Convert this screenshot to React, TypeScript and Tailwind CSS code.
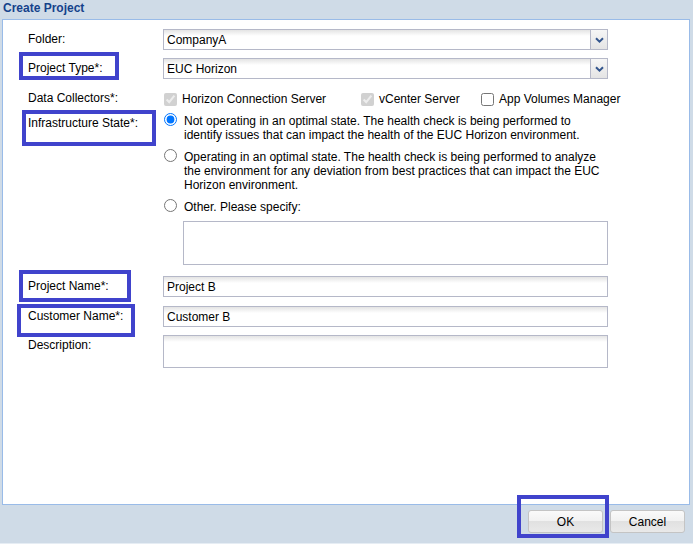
import React from "react"

const field =
  "border border-[#b5b8c8] bg-[linear-gradient(to_bottom,#e4e4e4,#ffffff_6px)]"

function Highlight({ className }: { className: string }) {
  return <div className={`pointer-events-none absolute border-4 border-[#4043cc] ${className}`} />
}

function Label({ text, box }: { text: string; box?: string }) {
  return (
    <div className="relative w-[135px] shrink-0 self-start leading-[21px] whitespace-nowrap">
      {text}
      {box && <Highlight className={box} />}
    </div>
  )
}

function Select({ value }: { value: string }) {
  return (
    <div className={`flex h-[21px] w-[445px] ${field}`}>
      <div className="flex-1 pl-[3px] leading-[20px]">{value}</div>
      <div className="flex w-[17px] items-center justify-center border-l border-[#b5b8c8] bg-[linear-gradient(to_bottom,#f6f6f6,#e4e4e4)]">
        <svg width="9" height="6" viewBox="0 0 9 6">
          <path d="M1 1.2 L4.5 4.6 L8 1.2" fill="none" stroke="#33558d" strokeWidth="2" />
        </svg>
      </div>
    </div>
  )
}

function Check({ label, checked, disabled, width }: { label: string; checked?: boolean; disabled?: boolean; width?: string }) {
  return (
    <label className={`flex items-center gap-[5px] ${width ?? ""}`}>
      <input type="checkbox" defaultChecked={checked} disabled={disabled} className="m-0 h-[13px] w-[13px]" />
      <span>{label}</span>
    </label>
  )
}

function Radio({ checked, children }: { checked?: boolean; children: React.ReactNode }) {
  return (
    <label className="flex items-start gap-[7px] pl-[1px] leading-[14px]">
      <input type="radio" name="state" defaultChecked={checked} className="m-0 h-[13px] w-[13px] shrink-0" />
      <span className="relative top-[1px]">{children}</span>
    </label>
  )
}

function Button({ text, box }: { text: string; box?: boolean }) {
  return (
    <div className="relative">
      <button className="h-[23px] w-[75px] rounded-[3px] border border-[#c4c4c4] bg-[linear-gradient(to_bottom,#fafafa,#f1f1f1_50%,#e1e1e1_50%,#e9e9e9)] text-[12px] text-black">
        {text}
      </button>
      {box && <Highlight className="left-[-11px] top-[-15px] h-[43px] w-[92px]" />}
    </div>
  )
}

export default function App() {
  return (
    <div className="flex h-[544px] w-[693px] flex-col bg-[#cfdbe7] font-['Liberation_Sans',Arial,sans-serif] text-[12px] text-black">
      <div className="h-[19px] pl-[3px] text-[12px] font-bold leading-[16px] text-[#15428b]">Create Project</div>

      <div className="ml-[2px] mr-[3px] flex h-[486px] flex-col border border-[#99bbe8] bg-white pl-[25px] pt-[9px]">
        <div className="flex">
          <Label text="Folder:" />
          <Select value="CompanyA" />
        </div>

        <div className="mt-[8px] flex">
          <Label text="Project Type*:" box="left-[-9px] top-[-6px] h-[28px] w-[100px]" />
          <Select value="EUC Horizon" />
        </div>

        <div className="mt-[9px] flex h-[22px] items-center">
          <Label text="Data Collectors*:" />
          <div className="flex items-center pl-[1px]">
            <Check label="Horizon Connection Server" checked disabled width="w-[197px]" />
            <Check label="vCenter Server" checked disabled width="w-[120px]" />
            <Check label="App Volumes Manager" />
          </div>
        </div>

        <div className="mt-[3px] flex">
          <Label text="Infrastructure State*:" box="left-[-6px] top-[-3px] h-[36px] w-[134px]" />
          <div className="flex w-[445px] flex-col gap-[8px]">
            <Radio checked>
              Not operating in an optimal state. The health check is being performed to
              <br />
              identify issues that can impact the health of the EUC Horizon environment.
            </Radio>
            <Radio>
              Operating in an optimal state. The health check is being performed to analyze
              <br />
              the environment for any deviation from best practices that can impact the EUC
              <br />
              Horizon environment.
            </Radio>
            <Radio>Other. Please specify:</Radio>
            <div className="ml-[20px] h-[44px] w-[425px] border border-[#b5b8c8] bg-white" />
          </div>
        </div>

        <div className="mt-[11px] flex">
          <Label text="Project Name*:" box="left-[-9px] top-[-6px] h-[32px] w-[112px]" />
          <div className={`h-[21px] w-[445px] pl-[3px] leading-[20px] ${field}`}>Project B</div>
        </div>

        <div className="mt-[9px] flex">
          <Label text="Customer Name*:" box="left-[-11px] top-[-2px] h-[33px] w-[118px]" />
          <div className={`h-[21px] w-[445px] pl-[3px] leading-[20px] ${field}`}>Customer B</div>
        </div>

        <div className="mt-[8px] flex">
          <Label text="Description:" />
          <div className={`h-[33px] w-[445px] ${field}`} />
        </div>
      </div>

      <div className="flex justify-end gap-[7px] pr-[8px] pt-[5px]">
        <Button text="OK" box />
        <Button text="Cancel" />
      </div>
      <div className="flex-1" />
      <div className="h-[1px] bg-[#e6edf4]" />
    </div>
  )
}
